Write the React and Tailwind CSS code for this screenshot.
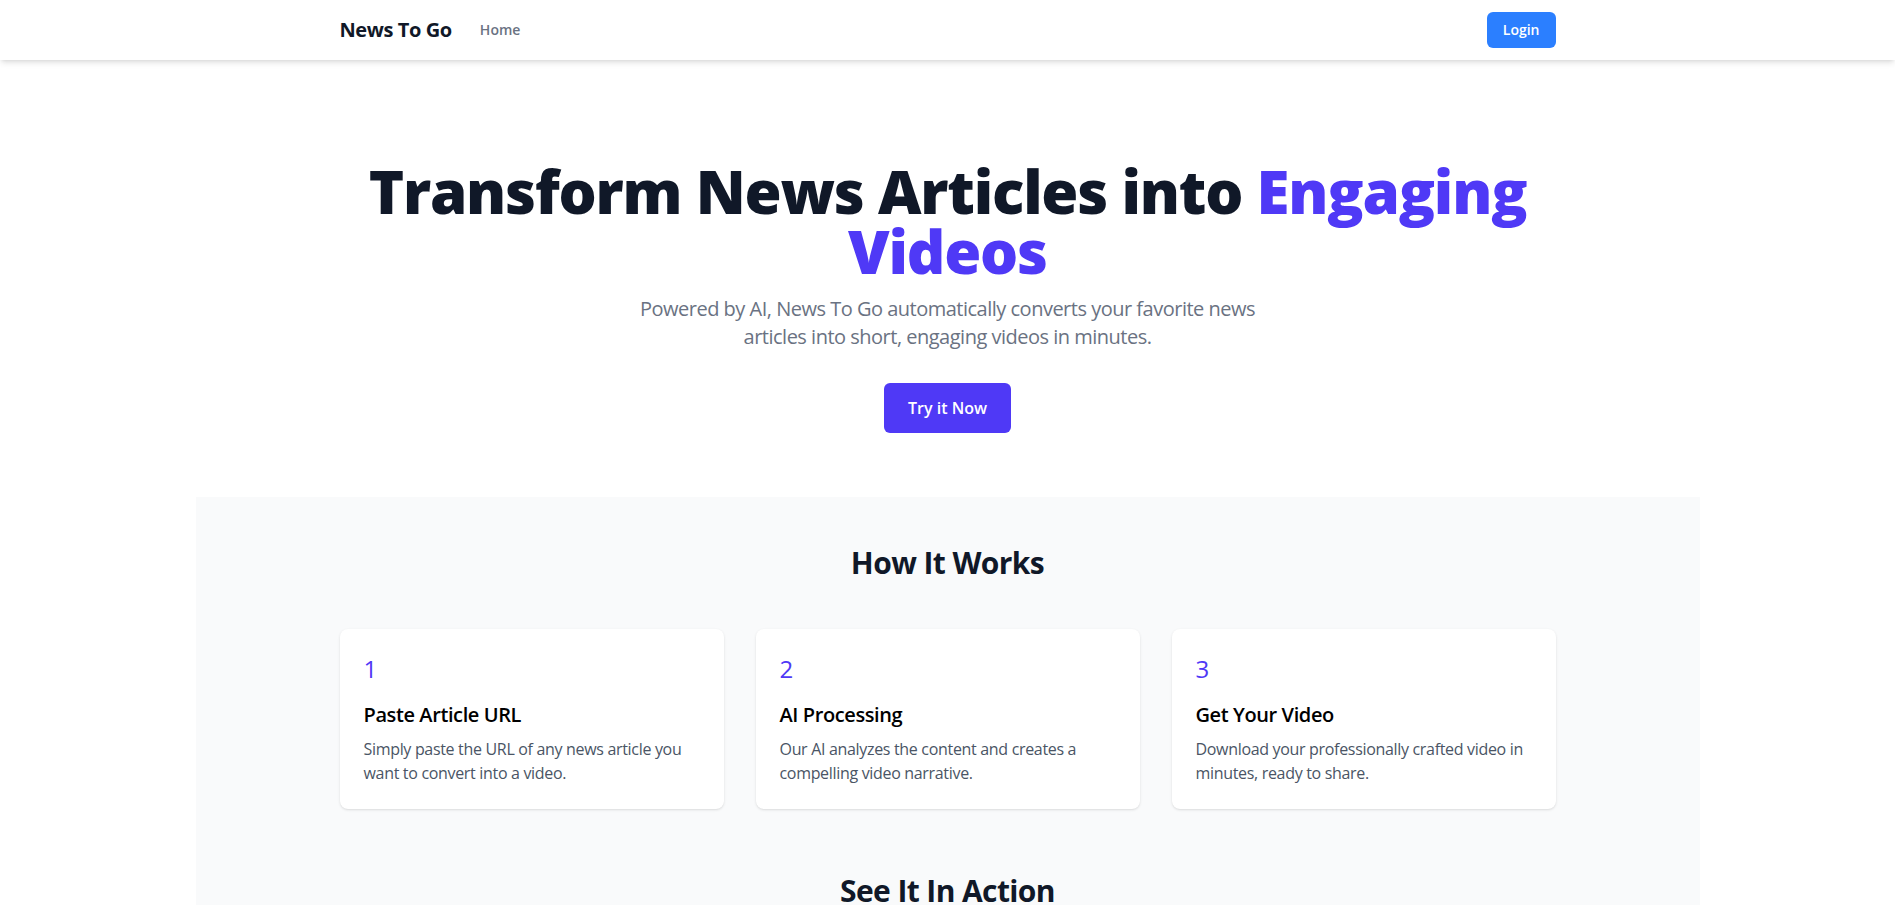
import React from "react";

const steps = [
  {
    n: "1",
    title: "Paste Article URL",
    desc: "Simply paste the URL of any news article you want to convert into a video.",
  },
  {
    n: "2",
    title: "AI Processing",
    desc: "Our AI analyzes the content and creates a compelling video narrative.",
  },
  {
    n: "3",
    title: "Get Your Video",
    desc: "Download your professionally crafted video in minutes, ready to share.",
  },
];

export default function App() {
  return (
    <div className="min-h-screen bg-white font-['Open_Sans',sans-serif]">
      <nav className="bg-white shadow-md">
        <div className="max-w-7xl mx-auto px-8 py-3 flex items-center justify-between">
          <div className="flex items-center gap-7">
            <span className="text-xl font-bold text-gray-900 tracking-[-0.02em]">News To Go</span>
            <a className="text-sm font-semibold text-gray-500">Home</a>
          </div>
          <button className="bg-blue-500 text-white text-sm font-semibold px-4 py-2 rounded-md">
            Login
          </button>
        </div>
      </nav>

      <section className="pt-[101px] pb-16 text-center px-8">
        <h1 className="max-w-[1216px] mx-auto text-6xl font-extrabold leading-none tracking-[-0.02em] text-gray-900">
          Transform News Articles into{" "}
          <span className="text-indigo-600">Engaging Videos</span>
        </h1>
        <p className="mt-[14px] text-xl text-gray-500 max-w-2xl mx-auto tracking-[-0.025em]">
          Powered by AI, News To Go automatically converts your favorite news articles into short, engaging videos in minutes.
        </p>
        <button className="mt-8 bg-indigo-600 text-white px-6 py-[13px] rounded-md font-semibold text-base">
          Try it Now
        </button>
      </section>

      <section className="max-w-[1504px] mx-auto bg-gray-50 py-12">
        <h2 className="text-3xl font-bold text-center text-gray-900 tracking-[-0.02em]">How It Works</h2>
        <div className="mt-12 max-w-[1216px] mx-auto grid grid-cols-3 gap-8">
          {steps.map((s) => (
            <div key={s.n} className="bg-white rounded-lg shadow-sm p-6">
              <div className="text-2xl text-indigo-600 mb-4">{s.n}</div>
              <h3 className="text-xl font-semibold text-black mb-2 tracking-[-0.02em]">{s.title}</h3>
              <p className="text-base text-gray-600 tracking-[-0.02em]">{s.desc}</p>
            </div>
          ))}
        </div>
        <h2 className="mt-16 text-3xl font-bold text-center text-gray-900 tracking-[-0.02em]">See It In Action</h2>
        <div className="mt-12 max-w-[1216px] mx-auto h-[480px] bg-white rounded-lg shadow-sm"></div>
      </section>
    </div>
  );
}
